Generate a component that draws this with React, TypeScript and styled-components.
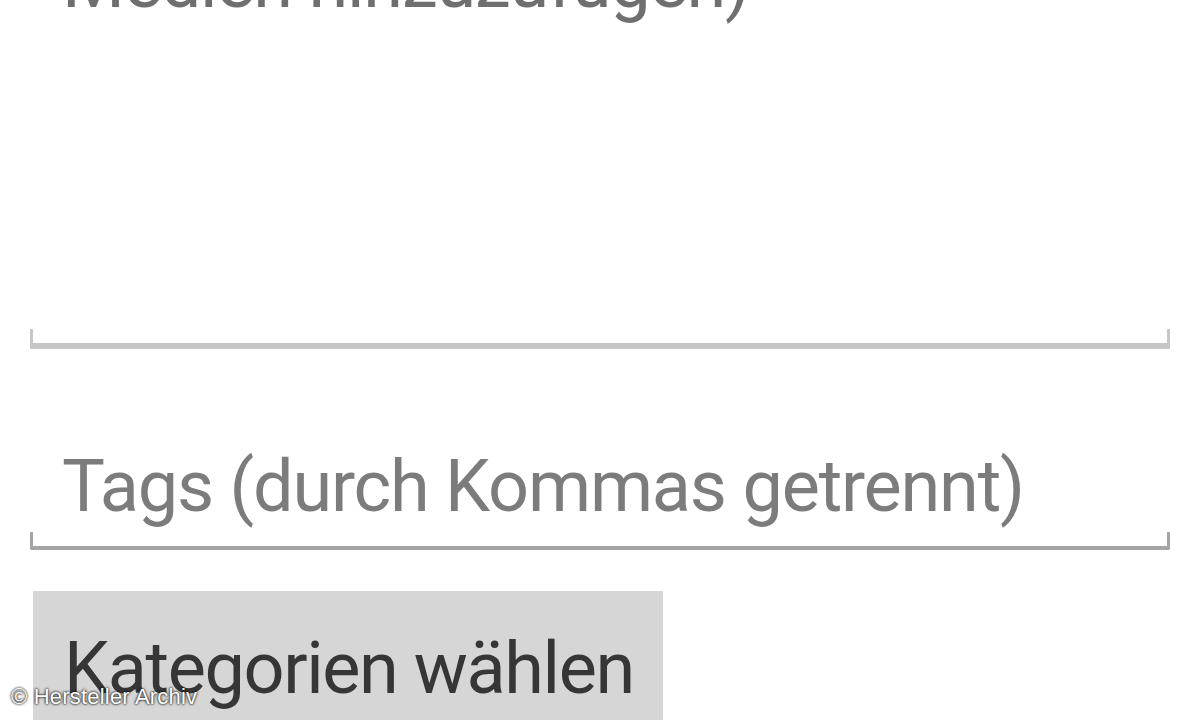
import styled, { createGlobalStyle } from 'styled-components';

const GlobalStyle = createGlobalStyle`
    html, body {
        margin: 0;
        padding: 0;
        background: #ffffff;
        overflow: hidden;
    }
    body {
        font-family: Roboto, "Noto Sans", "Liberation Sans", sans-serif;
    }
`

function App() {
    return (
        <>
            <GlobalStyle />
            <Screen>
                <Field>
                    <Hint tone="#6f6f6f">Medien hinzuzufügen)</Hint>
                    <TextBody />
                    <Underline weight={6} color="#c6c6c6" />
                </Field>
                <Field style={{ marginTop: "96px" }}>
                    <Hint tone="#7c7c7c">Tags (durch Kommas getrennt)</Hint>
                    <Underline weight={4} color="#a4a4a4" />
                </Field>
                <CategoryButton>Kategorien wählen</CategoryButton>
            </Screen>
            <Watermark>© Hersteller Archiv</Watermark>
        </>
    );
}

const Screen = styled.div`
    height: 720px;
    overflow: hidden;
    display: flex;
    flex-direction: column;
    padding: 0 30px;
    box-sizing: border-box;
`

const Field = styled.div`
    display: flex;
    flex-direction: column;
    &:first-child {
        margin-top: -59px;
    }
`

const Hint = styled.div<{ tone: string }>`
    font-size: 72px;
    line-height: 84px;
    letter-spacing: -1.2px;
    color: ${({ tone }) => tone};
    padding-left: 32px;
    white-space: nowrap;
`

const TextBody = styled.div`
    height: 301px;
`

const Underline = styled.div<{ weight: number; color: string }>`
    height: 14px;
    margin-top: 3px;
    border-bottom: ${({ weight }) => weight}px solid ${({ color }) => color};
    border-left: 3px solid ${({ color }) => color};
    border-right: 3px solid ${({ color }) => color};
    border-radius: 0 0 2px 2px;
`

const CategoryButton = styled.button`
    margin: 41px 0 0 3px;
    width: 630px;
    height: 170px;
    flex-shrink: 0;
    border: none;
    background: #d6d6d6;
    color: #363636;
    font-family: Roboto, "Noto Sans", "Liberation Sans", sans-serif;
    font-size: 72px;
    line-height: 84px;
    letter-spacing: -1.4px;
    text-align: left;
    padding: 36px 0 0 31px;
    display: flex;
    align-items: flex-start;
    white-space: nowrap;
`

const Watermark = styled.div`
    position: absolute;
    left: 11px;
    bottom: 10px;
    font-family: "Liberation Sans", Arial, sans-serif;
    font-size: 22px;
    letter-spacing: 0.2px;
    color: #ffffff;
    text-shadow: 0 0 2px #000, 0 0 3px rgba(0, 0, 0, 0.8);
`

export default App;
